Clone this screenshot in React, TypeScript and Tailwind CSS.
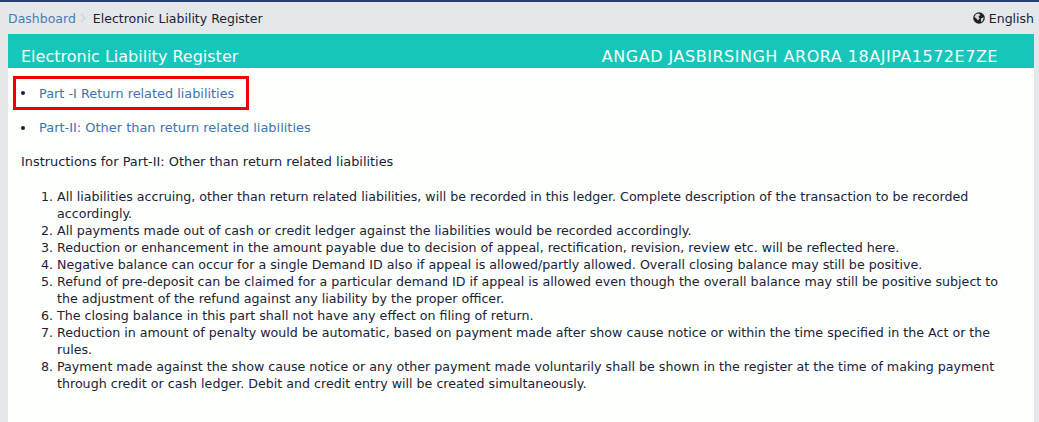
const items = [
  "All liabilities accruing, other than return related liabilities, will be recorded in this ledger. Complete description of the transaction to be recorded accordingly.",
  "All payments made out of cash or credit ledger against the liabilities would be recorded accordingly.",
  "Reduction or enhancement in the amount payable due to decision of appeal, rectification, revision, review etc. will be reflected here.",
  "Negative balance can occur for a single Demand ID also if appeal is allowed/partly allowed. Overall closing balance may still be positive.",
  "Refund of pre-deposit can be claimed for a particular demand ID if appeal is allowed even though the overall balance may still be positive subject to the adjustment of the refund against any liability by the proper officer.",
  "The closing balance in this part shall not have any effect on filing of return.",
  "Reduction in amount of penalty would be automatic, based on payment made after show cause notice or within the time specified in the Act or the rules.",
  "Payment made against the show cause notice or any other payment made voluntarily shall be shown in the register at the time of making payment through credit or cash ledger. Debit and credit entry will be created simultaneously.",
];

export default function App() {
  return (
    <div className="h-[422px] w-[1039px] overflow-hidden bg-[#e4e8eb] font-['DejaVu_Sans',sans-serif] text-[12.5px] leading-[17px] text-[#1a2238]">
      <div className="h-[2px] bg-[#25406f]" />
      <div className="flex h-[32px] items-center justify-between pl-[8px] pr-[5px]">
        <div className="flex items-center">
          <span className="text-[#4a7cb0]">Dashboard</span>
          <svg viewBox="0 0 6 10" className="ml-[4px] h-[10px] w-[6px]" fill="none" stroke="#cfd4d8" strokeWidth="1.5">
            <path d="M1 1 5 5 1 9" />
          </svg>
          <span className="ml-[7px]">Electronic Liability Register</span>
        </div>
        <div className="flex items-center gap-[4px]">
          <svg viewBox="0 0 12 12" className="h-[12px] w-[12px]">
            <circle cx="6" cy="6" r="5.8" fill="#222" />
            <path d="M3 2 6 1.4 7.2 3 5.4 4.8 6.6 6.2 5 8.4 3.2 6.2 1.4 5Z M8 6.2 10.8 5.6 9.8 8.8 8 10.2Z" fill="#d5d9dc" />
          </svg>
          <span>English</span>
        </div>
      </div>
      <div className="ml-[8px] mr-[5px] h-[388px] bg-[#fdfffc] text-[12.9px]">
        <div className="flex h-[34px] items-end justify-between bg-[#17c6bb] pl-[13px] pr-[36px] text-[16px] leading-[22px] text-[#f4fff8]">
          <span>Electronic Liability Register</span>
          <span className="tracking-[0.52px]">ANGAD JASBIRSINGH ARORA 18AJIPA1572E7ZE</span>
        </div>
        <ul className="mt-[8px] list-none pl-[5px]">
          <li className="flex h-[34px] w-[236px] items-center border-[3px] border-[#f00000] pl-[5px]">
            <span className="h-[4px] w-[4px] rounded-full bg-[#1a2238]" />
            <span className="ml-[14px] text-[12.85px] text-[#3f74ad]">Part -I Return related liabilities</span>
          </li>
          <li className="mt-[9px] flex h-[17px] items-center pl-[8px]">
            <span className="h-[4px] w-[4px] rounded-full bg-[#1a2238]" />
            <span className="ml-[14px] text-[12.95px] text-[#3f74ad]">Part-II: Other than return related liabilities</span>
          </li>
        </ul>
        <p className="mt-[17px] pl-[13px]">Instructions for Part-II: Other than return related liabilities</p>
        <ol className="mt-[18px] list-decimal pl-[49px] pr-[14px] text-[12.65px]">
          {items.map((t) => (
            <li key={t}>{t}</li>
          ))}
        </ol>
      </div>
    </div>
  );
}
